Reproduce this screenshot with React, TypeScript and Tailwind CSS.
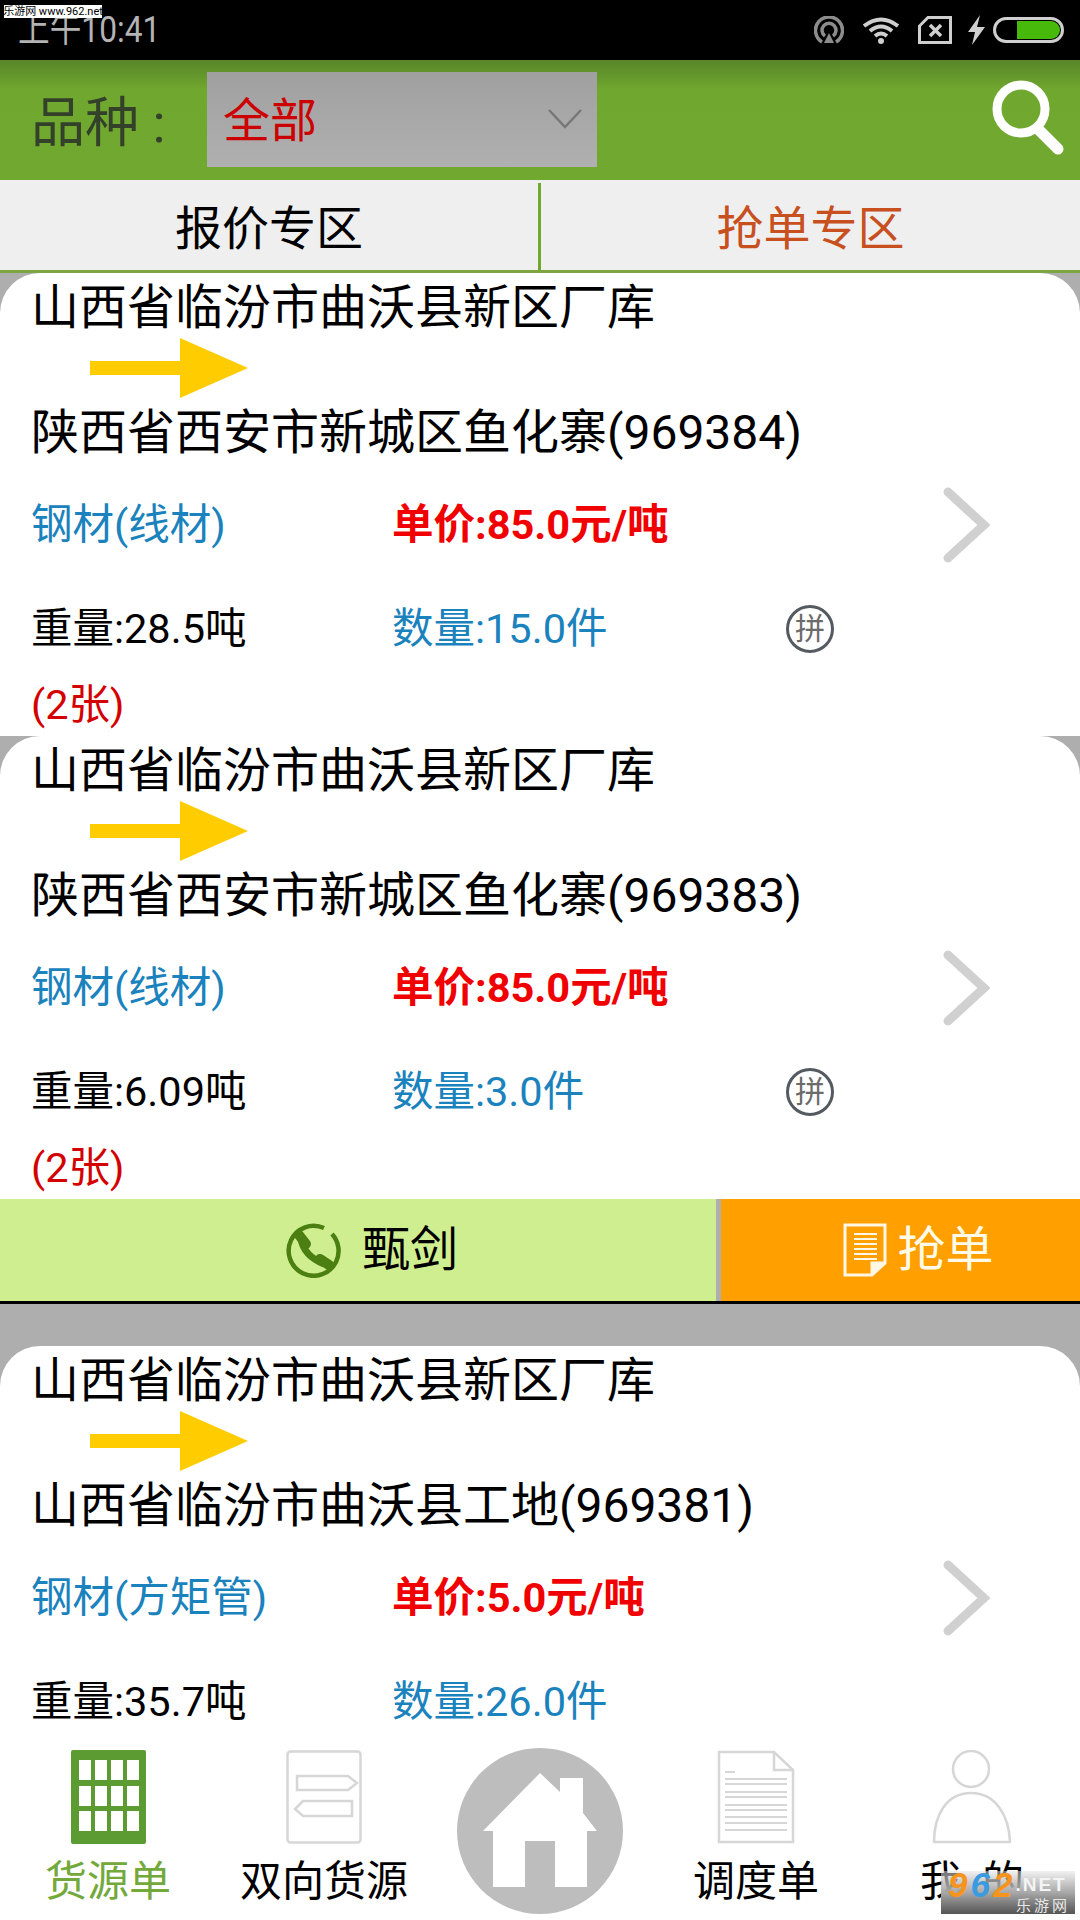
import React from "react";

const cards = [
  { to: "陕西省西安市新城区鱼化寨(969384)", kind: "钢材(线材)", price: "单价:85.0元/吨", weight: "重量:28.5吨", qty: "数量:15.0件", pin: true, note: "(2张)" },
  { to: "陕西省西安市新城区鱼化寨(969383)", kind: "钢材(线材)", price: "单价:85.0元/吨", weight: "重量:6.09吨", qty: "数量:3.0件", pin: true, note: "(2张)" },
];

function Arrow() {
  return (
    <svg width="158" height="60" viewBox="0 0 158 60" className="ml-[59px]">
      <polygon points="0,23 90,23 90,0 158,30 90,60 90,37 0,37" fill="#ffcc00" />
    </svg>
  );
}

function Chevron() {
  return (
    <svg width="47" height="76" viewBox="0 0 47 76">
      <polyline points="5,5 41,38 5,71" fill="none" stroke="#d0d0d0" strokeWidth="9" strokeLinecap="round" strokeLinejoin="miter" />
    </svg>
  );
}

function Pin() {
  return (
    <span className="flex h-[48px] w-[48px] items-center justify-center rounded-full border-[3px] border-[#555a60] text-[30px] leading-none text-[#6b6b6b]">
      拼
    </span>
  );
}

function Card({ to, kind, price, weight, qty, pin, note }: { to: string; kind: string; price: string; weight: string; qty: string; pin?: boolean; note?: string }) {
  return (
    <div className="flex h-[463px] shrink-0 flex-col rounded-t-[40px] bg-white pl-[31px]">
      <div className="flex h-[66px] shrink-0 items-center pt-[4px] text-[48px] leading-none text-black">山西省临汾市曲沃县新区厂库</div>
      <div className="flex h-[58px] shrink-0 items-center"><Arrow /></div>
      <div className="flex h-[68px] shrink-0 items-center pt-[4px] text-[48px] leading-none text-black">{to}</div>
      <div className="flex h-[120px] shrink-0 items-center text-[41.5px] leading-none">
        <span className="w-[361px] text-[#1a82bd]">{kind}</span>
        <span className="w-[551px] font-bold text-[#f00000]">{price}</span>
        <Chevron />
      </div>
      <div className="flex h-[88px] shrink-0 items-center text-[41.5px] leading-none">
        <span className="w-[361px] text-black">{weight}</span>
        <span className="w-[394px] text-[#1a82bd]">{qty}</span>
        {pin && <Pin />}
      </div>
      <div className="flex h-[63px] shrink-0 items-center text-[41.5px] leading-none text-[#d40000]">{note}</div>
    </div>
  );
}

function StatusIcons() {
  return (
    <div className="ml-auto flex items-center pr-[16px]">
      <svg width="30" height="28" viewBox="0 0 30 28" className="mr-[18px]" fill="none" stroke="#8c8c8c" strokeWidth="3.5">
        <path d="M8 26 A13.5 13.5 0 1 1 22 26" />
        <path d="M11 20 A7 7 0 1 1 19 20" />
        <polygon points="15,17 20,27 10,27" fill="#8c8c8c" stroke="none" />
      </svg>
      <svg width="38" height="28" viewBox="0 0 38 28" className="mr-[18px]" fill="none" stroke="#cfcfcf" strokeWidth="4">
        <path d="M2 10 Q19 -3 36 10" />
        <path d="M8 15 Q19 6 30 15" />
        <path d="M13 20 Q19 15 25 20" />
        <circle cx="19" cy="25" r="3" fill="#cfcfcf" stroke="none" />
      </svg>
      <svg width="34" height="28" viewBox="0 0 34 28" className="mr-[16px]" fill="none" stroke="#cfcfcf" strokeWidth="3">
        <path d="M10 1.5 H32.5 V26.5 H1.5 V10 Z" />
        <path d="M12 9 L23 20 M23 9 L12 20" strokeWidth="3.5" />
      </svg>
      <svg width="17" height="30" viewBox="0 0 17 30" className="mr-[8px]">
        <polygon points="12,0 0,17 7,17 4,30 17,12 9,12" fill="#cfcfcf" />
      </svg>
      <div className="flex h-[26px] w-[71px] items-center justify-end rounded-full border-[3px] border-[#cfcfcf] pr-[1px]">
        <div className="h-[18px] w-[43px] rounded-r-full bg-[#46b90a]" />
      </div>
    </div>
  );
}

function GridIcon() {
  const xs = [8, 24, 40, 56];
  const ys = [10, 36, 61];
  return (
    <svg width="75" height="94" viewBox="0 0 75 94">
      <rect width="75" height="94" rx="2" fill="#5c9a32" />
      {ys.map((y) => xs.map((x) => <rect key={`${x}-${y}`} x={x} y={y} width="12" height="20" fill="#ffffff" />))}
    </svg>
  );
}

function RouteIcon() {
  return (
    <svg width="76" height="94" viewBox="0 0 76 94" fill="none" stroke="#d6d6d6" strokeWidth="2.5">
      <rect x="1.5" y="1.5" width="73" height="91" rx="3" />
      <path d="M11 26 H62 L71 33 L62 40 H11 Z" />
      <path d="M66 51 H17 L9 59 L17 66 H66 Z" />
    </svg>
  );
}

function HomeIcon() {
  return (
    <svg width="166" height="166" viewBox="0 0 166 166">
      <circle cx="83" cy="83" r="83" fill="#bdbdbd" />
      <polygon points="83,25 103,44 103,30 126,30 126,65 140,83 130,83 130,139 98,139 98,93 68,93 68,139 36,139 36,83 26,83" fill="#ffffff" />
    </svg>
  );
}

function DocIcon() {
  const lines = [29, 34, 42, 47, 55, 60, 67, 73, 80];
  return (
    <svg width="78" height="94" viewBox="0 0 78 94" fill="none" stroke="#d6d6d6" strokeWidth="2.5">
      <path d="M2 2 H57 L76 20 V92 H2 Z" />
      <path d="M57 2 V20 H76" />
      <path d="M8 22 H18" strokeWidth="2" />
      {lines.map((y) => <path key={y} d={`M8 ${y} H70`} strokeWidth="2" />)}
    </svg>
  );
}

function PersonIcon() {
  return (
    <svg width="80" height="94" viewBox="0 0 80 94" fill="none" stroke="#d6d6d6" strokeWidth="2.5">
      <circle cx="39" cy="19" r="18" />
      <path d="M2 92 C2 66 14 43 39 43 C64 43 77 66 78 92 Z" strokeLinejoin="round" />
    </svg>
  );
}

export default function App() {
  return (
    <div className="relative flex h-[1920px] w-[1080px] flex-col overflow-hidden bg-[#aeaeae] font-['Roboto','Noto_Sans_CJK_SC',sans-serif]">
      {/* status bar */}
      <div className="flex h-[60px] shrink-0 items-center bg-black pl-[18px]">
        <span className="origin-left scale-x-[0.88] text-[36px] leading-none whitespace-nowrap text-[#b4b4b4]">上午10:41</span>
        <StatusIcons />
      </div>
      <div className="absolute top-[5px] left-[4px] flex h-[13px] w-[98px] items-center justify-center bg-white text-[11px] leading-none whitespace-nowrap text-black">
        乐游网 www.962.net
      </div>

      {/* filter bar */}
      <div className="flex h-[120px] shrink-0 items-center bg-linear-to-b from-[#588529] via-[#70a82f] via-25% to-[#71a82f] pl-[31px]">
        <span className="w-[176px] pt-[8px] text-[54px] leading-none whitespace-nowrap text-[#33402a]">品种 :</span>
        <div className="mb-[2px] flex h-[95px] w-[390px] items-center justify-between bg-linear-to-b from-[#a0a0a0] to-[#b0b0b0] pr-[15px] pl-[16px]">
          <span className="pt-[3px] text-[47px] leading-none text-[#cc0000]">全部</span>
          <svg width="34" height="20" viewBox="0 0 34 20" fill="none" stroke="#777777" strokeWidth="2.5">
            <polyline points="1,1 17,18 33,1" />
          </svg>
        </div>
        <svg width="72" height="88" viewBox="0 0 72 88" className="mt-[6px] mr-[16px] ml-auto" fill="none" stroke="#ffffff">
          <circle cx="29" cy="30" r="24" strokeWidth="9" />
          <line x1="46" y1="50" x2="66" y2="70" strokeWidth="11" strokeLinecap="round" />
        </svg>
      </div>

      {/* tabs */}
      <div className="flex h-[93px] shrink-0 border-b-[3px] border-[#7ea63f] bg-[#efefef] pt-[3px]">
        <div className="flex flex-1 items-center justify-center border-r-[3px] border-[#70a82f] pt-[4px] text-[47px] leading-none text-black">报价专区</div>
        <div className="flex w-[539px] items-center justify-center pt-[4px] text-[47px] leading-none text-[#c8501e]">抢单专区</div>
      </div>

      {/* list */}
      <div className="flex min-h-0 flex-1 flex-col overflow-hidden">
        {cards.map((c) => <Card key={c.to} {...c} />)}
        <div className="flex h-[102px] shrink-0 bg-[#cfee8f]">
          <div className="flex w-[716px] items-center justify-center gap-[20px] pl-[28px]">
            <svg width="56" height="56" viewBox="0 0 56 56" fill="none" stroke="#4c7f12">
              <path d="M38 6 A25 25 0 1 0 50 40 A25 25 0 0 0 46 12" strokeWidth="4.5" />
              <path d="M15 17 Q18 34 38 42" strokeWidth="7" />
              <path d="M13 13 L20 22 M34 37 L43 43" strokeWidth="10" strokeLinecap="round" />
            </svg>
            <span className="text-[48px] leading-none text-black">甄剑</span>
          </div>
          <div className="w-[5px] bg-[#aeaeae]" />
          <div className="flex flex-1 items-center justify-center gap-[10px] bg-[#ff9f00] pl-[36px]">
            <svg width="44" height="54" viewBox="0 0 44 54" fill="none" stroke="#fff7e6" strokeWidth="3">
              <path d="M2 2 H42 V40 L29 52 H2 Z" />
              <path d="M29 52 V40 H42" fill="#fff7e6" />
              {[11, 16, 21, 26, 31, 36].map((y) => <path key={y} d={`M11 ${y} H34`} strokeWidth="2" />)}
            </svg>
            <span className="text-[48px] leading-none text-[#fffbe8]">抢单</span>
          </div>
        </div>
        <div className="h-[3px] shrink-0 bg-black" />
        <div className="h-[42px] shrink-0" />
        <Card to="山西省临汾市曲沃县工地(969381)" kind="钢材(方矩管)" price="单价:5.0元/吨" weight="重量:35.7吨" qty="数量:26.0件" />
      </div>

      {/* bottom nav */}
      <div className="grid h-[190px] shrink-0 grid-cols-5 bg-white">
        <div className="flex flex-col items-center pt-[20px]">
          <GridIcon />
          <span className="mt-[17px] text-[42px] leading-none text-[#72a93a]">货源单</span>
        </div>
        <div className="flex flex-col items-center pt-[20px]">
          <RouteIcon />
          <span className="mt-[17px] text-[42px] leading-none whitespace-nowrap text-black">双向货源</span>
        </div>
        <div className="flex flex-col items-center pt-[18px]">
          <HomeIcon />
        </div>
        <div className="flex flex-col items-center pt-[20px]">
          <DocIcon />
          <span className="mt-[17px] text-[42px] leading-none text-black">调度单</span>
        </div>
        <div className="flex flex-col items-center pt-[20px]">
          <PersonIcon />
          <span className="mt-[17px] flex gap-[20px] text-[42px] leading-none text-black"><span>我</span><span>的</span></span>
        </div>
      </div>

      {/* watermark */}
      <div className="absolute top-[1871px] left-[941px] flex h-[43px] w-[134px] flex-col bg-linear-to-b from-[#e4e4e480] via-[#a8a8a8] via-50% to-[#555555] pr-[5px] font-['Liberation_Sans','Noto_Sans_CJK_SC',sans-serif]">
        <div className="flex h-[27px] items-center pl-[7px] leading-none">
          <span className="text-[35px] font-black tracking-[3px] text-[#f7941d] italic">9</span>
          <span className="text-[35px] font-black tracking-[3px] text-[#3a9be0] italic">6</span>
          <span className="text-[35px] font-black tracking-[3px] text-[#f7941d] italic">2</span>
          <span className="text-[19px] font-bold tracking-[2px] text-[#f4f4f4]">.NET</span>
        </div>
        <span className="self-end text-[15px] leading-none tracking-[3px] text-[#e8e8e8]">乐游网</span>
      </div>
    </div>
  );
}
